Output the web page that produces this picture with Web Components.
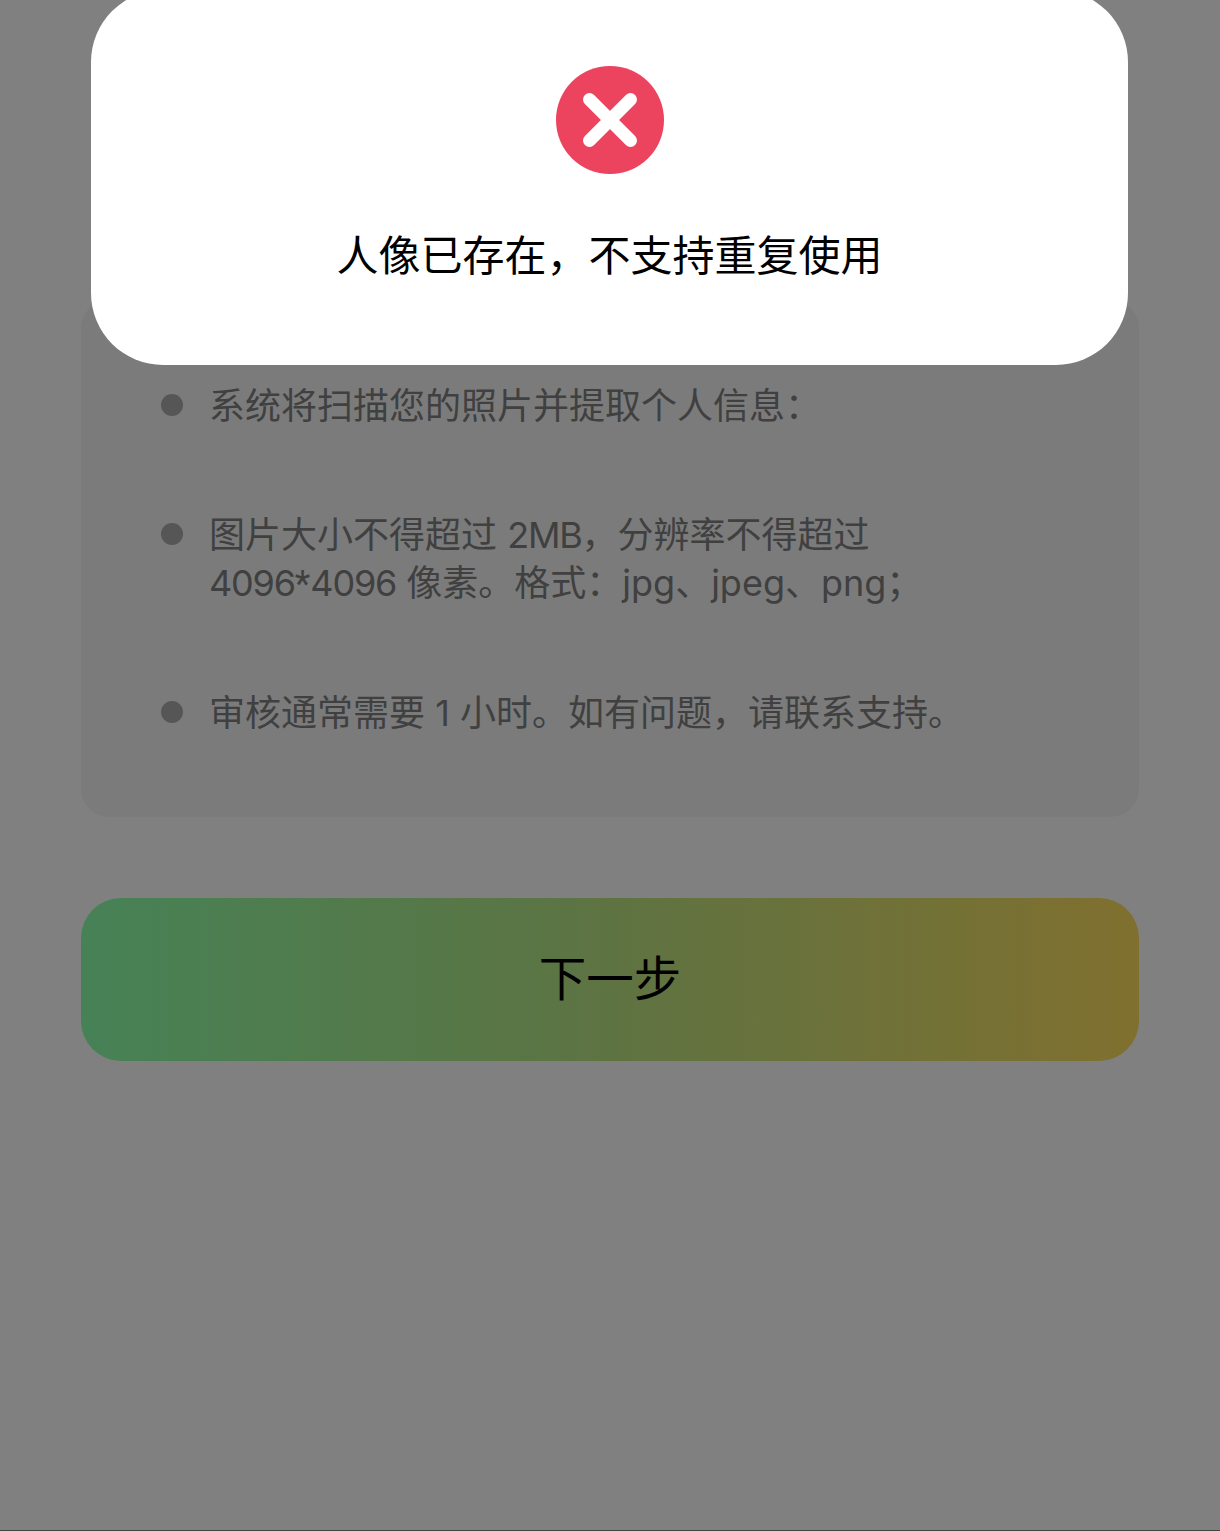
<!DOCTYPE html>
<html lang="zh">
<head>
<meta charset="utf-8">
<title>上传人像</title>
<style>
  html, body { margin: 0; padding: 0; background: #808080; }
  body { font-family: Inter, "Noto Sans CJK SC", "Noto Sans", sans-serif; }
</style>
</head>
<body>
<upload-page>
  <tip-panel>
    <tip-item>系统将扫描您的照片并提取个人信息：</tip-item>
    <tip-item>图片大小不得超过 <span class="num">2MB</span>，分辨率不得超过<br><span class="num">4096</span><span class="ast">*</span><span class="num">4096</span> 像素。格式：jpg、jpeg、png；</tip-item>
    <tip-item>审核通常需要 1 小时。如有问题，请联系支持。</tip-item>
  </tip-panel>
  <next-button>下一步</next-button>
  <error-toast slot="overlay">人像已存在，不支持重复使用</error-toast>
</upload-page>

<script>
class UploadPage extends HTMLElement {
  constructor() {
    super();
    this.attachShadow({ mode: 'open' }).innerHTML = `
      <style>
        :host {
          display: flex;
          flex-direction: column;
          gap: 81px;
          position: relative;
          box-sizing: border-box;
          height: 1531px;
          padding: 300px 81px 0;
          background: #808080;
          border-bottom: 1px solid #444;
          overflow: hidden;
        }
      </style>
      <slot></slot>
      <slot name="overlay"></slot>
    `;
  }
}

class TipPanel extends HTMLElement {
  constructor() {
    super();
    this.attachShadow({ mode: 'open' }).innerHTML = `
      <style>
        :host {
          display: flex;
          flex-direction: column;
          gap: 81px;
          padding: 81px 80px 81px;
          background: #7b7b7b;
          border-radius: 28px;
        }
      </style>
      <slot></slot>
    `;
  }
}

class TipItem extends HTMLElement {
  constructor() {
    super();
    this.attachShadow({ mode: 'open' }).innerHTML = `
      <style>
        :host {
          display: flex;
          gap: 26px;
          font-size: 36px;
          font-weight: 400;
          line-height: 48px;
          color: #404040;
        }
        .dot {
          flex: none;
          width: 22px;
          height: 22px;
          margin-top: 13px;
          border-radius: 50%;
          background: #565656;
        }
        .text { margin: 1px 0 -1px; }
        ::slotted(.num) { letter-spacing: -1.2px; }
        ::slotted(.ast) { font-family: Roboto, sans-serif; }
      </style>
      <span class="dot"></span>
      <span class="text"><slot></slot></span>
    `;
  }
}

class NextButton extends HTMLElement {
  constructor() {
    super();
    this.attachShadow({ mode: 'open' }).innerHTML = `
      <style>
        :host {
          display: flex;
          align-items: center;
          justify-content: center;
          height: 163px;
          border-radius: 40px;
          background: linear-gradient(90deg, #468256, #5e7342 50%, #80702f);
          color: #000;
          font-size: 47.5px;
        }
        span { margin-top: -9px; }
      </style>
      <span><slot></slot></span>
    `;
  }
}

class ErrorToast extends HTMLElement {
  constructor() {
    super();
    this.attachShadow({ mode: 'open' }).innerHTML = `
      <style>
        :host {
          position: absolute;
          left: 91px;
          top: -10px;
          box-sizing: border-box;
          width: 1037px;
          height: 375px;
          padding-top: 76px;
          display: flex;
          flex-direction: column;
          align-items: center;
          gap: 52px;
          background: #fff;
          border-radius: 72px;
          color: #000;
          font-size: 42px;
          line-height: 60px;
        }
        svg { display: block; }
      </style>
      <svg width="108" height="108" viewBox="0 0 108 108">
        <circle cx="54" cy="54" r="54" fill="#ec435e"/>
        <path d="M33.5 33.5L74.5 74.5M74.5 33.5L33.5 74.5" stroke="#fff" stroke-width="13" stroke-linecap="round" fill="none"/>
      </svg>
      <span><slot></slot></span>
    `;
  }
}

customElements.define('upload-page', UploadPage);
customElements.define('tip-panel', TipPanel);
customElements.define('tip-item', TipItem);
customElements.define('next-button', NextButton);
customElements.define('error-toast', ErrorToast);
</script>
</body>
</html>
